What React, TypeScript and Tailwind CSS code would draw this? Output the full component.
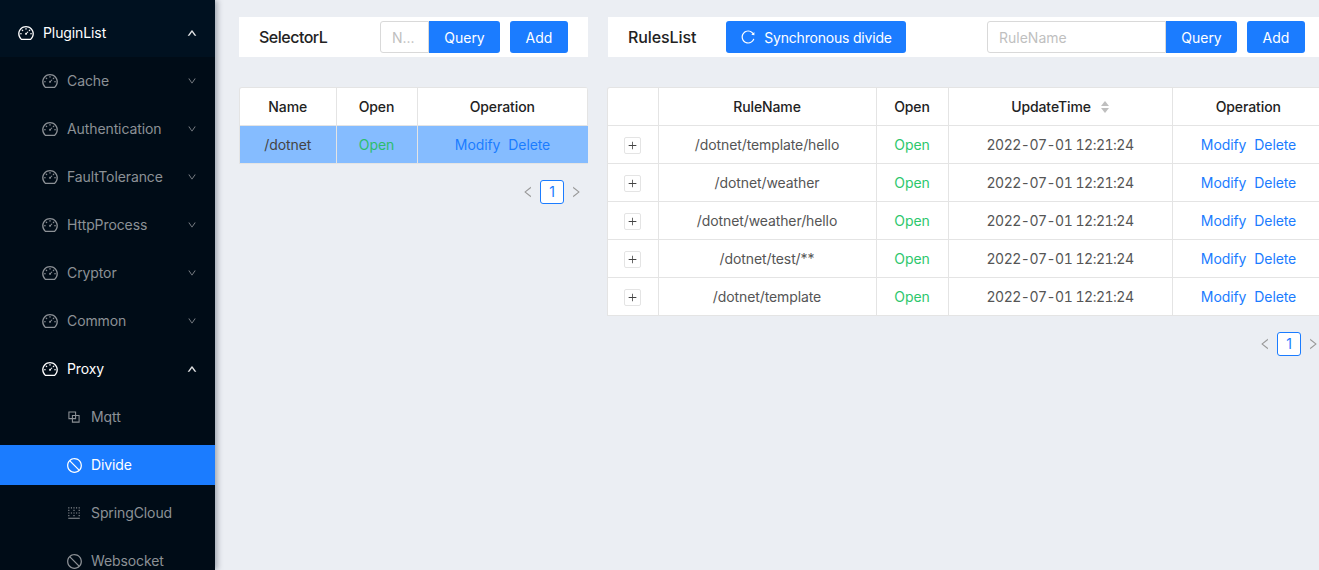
import {
  AiOutlineBlock,
  AiOutlineBorderBottom,
  AiOutlineDashboard,
  AiOutlineDown,
  AiOutlineLeft,
  AiOutlinePlus,
  AiOutlineReload,
  AiOutlineRight,
  AiOutlineStop,
  AiOutlineUp,
} from 'react-icons/ai';

const groups = ['Cache', 'Authentication', 'FaultTolerance', 'HttpProcess', 'Cryptor', 'Common'];

const rules = [
  '/dotnet/template/hello',
  '/dotnet/weather',
  '/dotnet/weather/hello',
  '/dotnet/test/**',
  '/dotnet/template',
];

function Sidebar() {
  return (
    <aside className="h-[570px] w-[215px] shrink-0 overflow-hidden bg-[#000c17] text-[14px] tracking-[-0.1px] text-[#8c9196] shadow-[2px_0_6px_rgba(0,21,41,0.35)]">
      <div className="flex h-[57px] items-center bg-[#001120] pt-[9px] pl-[17px] pr-[18px] text-white">
        <AiOutlineDashboard className="mr-[8px] text-[18px]" />
        <span className="mb-[2px] flex-1">PluginList</span>
        <AiOutlineUp className="text-[10px]" strokeWidth={60} />
      </div>
      {groups.map((g) => (
        <div key={g} className="flex h-[48px] items-center pl-[41px] pr-[18px]">
          <AiOutlineDashboard className="mr-[8px] text-[18px]" />
          <span className="mb-[2px] flex-1">{g}</span>
          <AiOutlineDown className="text-[10px]" />
        </div>
      ))}
      <div className="flex h-[48px] items-center pl-[41px] pr-[18px] text-white">
        <AiOutlineDashboard className="mr-[8px] text-[18px]" />
        <span className="mb-[2px] flex-1">Proxy</span>
        <AiOutlineUp className="text-[10px]" strokeWidth={60} />
      </div>
      <div className="flex h-[48px] items-center pl-[66px]">
        <AiOutlineBlock className="mr-[9px] text-[16px]" />
        <span className="mb-[2px]">Mqtt</span>
      </div>
      <div className="my-[4px] flex h-[40px] items-center bg-[#1b7cff] pl-[66px] text-white">
        <AiOutlineStop className="mr-[8px] text-[17px]" />
        <span className="mb-[2px]">Divide</span>
      </div>
      <div className="flex h-[48px] items-center pl-[66px]">
        <AiOutlineBorderBottom className="mr-[9px] text-[16px]" />
        <span className="mb-[2px]">SpringCloud</span>
      </div>
      <div className="flex h-[48px] items-center pl-[66px]">
        <AiOutlineStop className="mr-[8px] text-[17px]" />
        <span className="mb-[2px]">Websocket</span>
      </div>
    </aside>
  );
}

function BlueButton({ children, className = '' }: { children: React.ReactNode; className?: string }) {
  return (
    <button type="button" className={`flex h-[32px] items-center justify-center bg-[#1b7cff] text-white ${className}`}>
      {children}
    </button>
  );
}

function Search({ placeholder, inputClass }: { placeholder: string; inputClass: string }) {
  return (
    <div className="flex">
      <div className={`flex h-[32px] items-center rounded-l-[3px] border border-[#d9d9d9] bg-white pl-[11px] text-[#bfbfbf] ${inputClass}`}>
        {placeholder}
      </div>
      <BlueButton className="w-[71px] rounded-r-[3px]">Query</BlueButton>
    </div>
  );
}

function Pager() {
  return (
    <div className="mt-[16px] flex items-center justify-end pr-[5px] text-[#999]">
      <AiOutlineLeft className="text-[14px]" />
      <div className="mx-[5px] flex h-[24px] w-[24px] items-center justify-center rounded-[3px] border border-[#1b7cff] bg-white text-[#1b7cff]">
        1
      </div>
      <AiOutlineRight className="text-[14px]" />
    </div>
  );
}

const th = 'h-[37px] border-r border-b border-[#e4e4e4] font-medium text-[#222]';
const td = 'h-[38px] border-r border-b border-[#e4e4e4] text-center text-[#555]';

function SelectorPanel() {
  return (
    <section className="w-[349px] shrink-0">
      <div className="flex h-[40px] items-center bg-white pl-[20px]">
        <div className="w-[121px] text-[16px] font-medium tracking-[-0.5px] text-[#222]">SelectorL</div>
        <Search placeholder="N..." inputClass="w-[49px]" />
        <BlueButton className="ml-[10px] w-[58px] rounded-[3px]">Add</BlueButton>
      </div>
      <div className="mt-[30px] overflow-hidden rounded-t-[3px] border-t border-l border-[#e4e4e4] tracking-[-0.1px]">
        <table className="w-full table-fixed bg-white text-center">
          <colgroup>
            <col className="w-[96px]" />
            <col className="w-[81px]" />
            <col />
          </colgroup>
          <thead>
            <tr>
              <th className={th}>Name</th>
              <th className={th}>Open</th>
              <th className={th}>Operation</th>
            </tr>
          </thead>
          <tbody>
            <tr className="bg-[#85bcff]">
              <td className="h-[38px] border-r border-b border-[#e4e4e4] text-[#444]">/dotnet</td>
              <td className="border-r border-b border-[#e4e4e4] text-[#2dbd6e]">Open</td>
              <td className="border-b border-[#e4e4e4] text-[#1b7cff]">
                Modify<span className="ml-[8px]">Delete</span>
              </td>
            </tr>
          </tbody>
        </table>
      </div>
      <Pager />
    </section>
  );
}

function RulesPanel() {
  return (
    <section className="ml-[20px] w-[717px] shrink-0">
      <div className="flex h-[40px] items-center bg-white pl-[20px] pr-[20px]">
        <div className="w-[98px] text-[16px] font-medium tracking-[-0.1px] text-[#222]">RulesList</div>
        <BlueButton className="w-[180px] gap-[8px] rounded-[3px] tracking-[-0.2px]">
          <AiOutlineReload className="text-[16px]" />
          Synchronous divide
        </BlueButton>
        <div className="ml-auto flex items-center">
          <Search placeholder="RuleName" inputClass="w-[179px]" />
          <BlueButton className="ml-[10px] w-[58px] rounded-[3px]">Add</BlueButton>
        </div>
      </div>
      <div className="mt-[30px] -ml-px overflow-hidden rounded-t-[3px] border-t border-l border-[#e4e4e4] tracking-[-0.1px]">
        <table className="w-full table-fixed bg-white text-center">
          <colgroup>
            <col className="w-[50px]" />
            <col className="w-[218px]" />
            <col className="w-[72px]" />
            <col className="w-[224px]" />
            <col />
          </colgroup>
          <thead>
            <tr>
              <th className={th} />
              <th className={th}>RuleName</th>
              <th className={th}>Open</th>
              <th className={th}>
                <span className="inline-flex items-center gap-[10px]">
                  UpdateTime
                  <span className="mt-px flex flex-col gap-[2px]">
                    <span className="h-0 w-0 border-x-[4px] border-b-[5px] border-x-transparent border-b-[#bfbfbf]" />
                    <span className="h-0 w-0 border-x-[4px] border-t-[5px] border-x-transparent border-t-[#bfbfbf]" />
                  </span>
                </span>
              </th>
              <th className={th}>Operation</th>
            </tr>
          </thead>
          <tbody>
            {rules.map((r) => (
              <tr key={r}>
                <td className={td}>
                  <div className="flex justify-center pt-[2px]">
                    <span className="flex h-[17px] w-[17px] items-center justify-center rounded-[2px] border border-[#e4e4e4] text-[11px] text-[#444]">
                      <AiOutlinePlus />
                    </span>
                  </div>
                </td>
                <td className={td}>{r}</td>
                <td className="border-r border-b border-[#e4e4e4] text-[#2dc76d]">Open</td>
                <td className={`${td} tracking-[-0.5px] tabular-nums`}>2022-07-01 12:21:24</td>
                <td className="border-b border-[#e4e4e4] text-[#1b7cff]">
                  Modify<span className="ml-[8px]">Delete</span>
                </td>
              </tr>
            ))}
          </tbody>
        </table>
      </div>
      <Pager />
    </section>
  );
}

export default function App() {
  return (
    <div className="flex h-[570px] w-[1319px] overflow-hidden bg-[#ebeef3] font-['Inter',sans-serif] text-[14px]">
      <Sidebar />
      <main className="flex items-start pt-[17px] pl-[24px]">
        <SelectorPanel />
        <RulesPanel />
      </main>
    </div>
  );
}
